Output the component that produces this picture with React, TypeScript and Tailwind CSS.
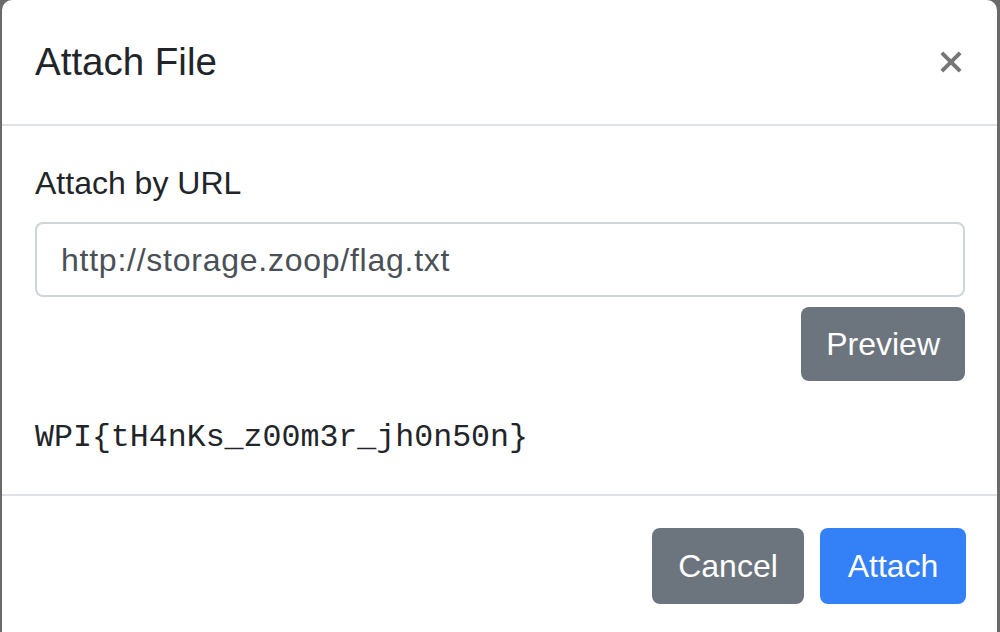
import React from "react";

export default function App() {
  return (
    <div
      className="w-[1000px] h-[632px] overflow-hidden bg-[#6a6a6a] flex"
      style={{ fontFamily: '"Liberation Sans", Arial, sans-serif' }}
    >
      <div className="ml-[2px] w-[995px] h-[700px] bg-white rounded-t-[10px] flex flex-col shrink-0">
        {/* Header */}
        <div className="h-[126px] border-b-2 border-[#dee2e6] pl-[33px] pr-[32px] flex items-center justify-between shrink-0">
          <h5 className="text-[38.5px] leading-[60px] text-[#212529] font-normal">Attach File</h5>
          <button className="w-[40px] h-[40px] flex items-center justify-center mr-[-6px] -mt-[1px]">
            <svg width="22" height="22" viewBox="0 0 24 24">
              <path d="M2 2 L22 22 M22 2 L2 22" stroke="#767676" strokeWidth="4.4" strokeLinecap="butt" />
            </svg>
          </button>
        </div>
        {/* Body */}
        <div className="pl-[33px] pr-[32px] pt-[32px] pb-[32px] flex flex-col border-b-2 border-[#dee2e6] shrink-0">
          <label className="text-[32px] leading-[48px] text-[#212529] mt-[1px]">Attach by URL</label>
          <div className="mt-[15px] h-[75px] border-2 border-[#ced4da] rounded-[8px] flex items-center px-[24px] text-[32px] tracking-[0.75px] text-[#495057]">
            http://storage.zoop/flag.txt
          </div>
          <div className="flex justify-end mt-[10px]">
            <button className="h-[74px] px-[25px] rounded-[8px] bg-[#6c757d] text-white text-[32px] leading-[48px]">
              Preview
            </button>
          </div>
          <div
            className="mt-[33px] text-[31.6px] leading-[48px] text-[#212529]"
            style={{ fontFamily: '"Liberation Mono", "Courier New", monospace' }}
          >
            WPI{"{"}tH4nKs_z00m3r_jh0n50n{"}"}
          </div>
        </div>
        {/* Footer */}
        <div className="pt-[32px] pr-[31px] flex justify-end gap-[16px]">
          <button className="h-[76px] w-[152px] rounded-[8px] bg-[#6c757d] text-white text-[32px] leading-[48px]">
            Cancel
          </button>
          <button className="h-[76px] w-[146px] rounded-[8px] bg-[#3480f6] text-white text-[32px] leading-[48px]">
            Attach
          </button>
        </div>
      </div>
    </div>
  );
}
